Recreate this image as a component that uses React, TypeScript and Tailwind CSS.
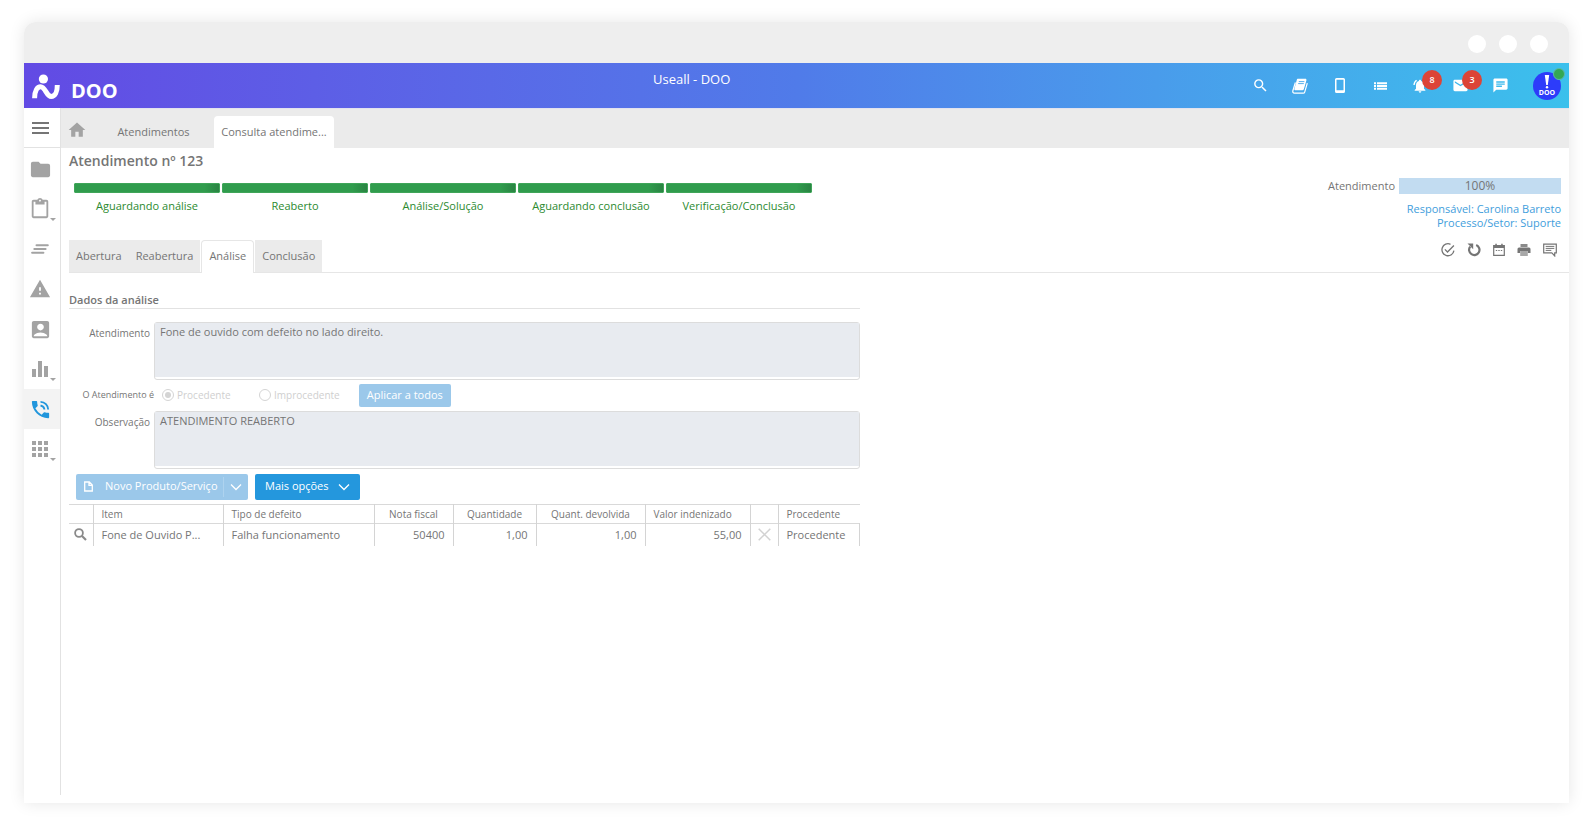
import type { ReactNode } from 'react';
import {
  MdAccountBox,
  MdApps,
  MdChat,
  MdContentPaste,
  MdEmail,
  MdEqualizer,
  MdFolder,
  MdHome,
  MdNotificationsActive,
  MdPhoneInTalk,
  MdSearch,
  MdWarning,
} from 'react-icons/md';

const STEPS = ['Aguardando análise', 'Reaberto', 'Análise/Solução', 'Aguardando conclusão', 'Verificação/Conclusão'];

const SECTION_TABS = ['Abertura', 'Reabertura', 'Análise', 'Conclusão'];

interface SidebarItem {
  label: string;
  icon: ReactNode;
  hasMenu?: boolean;
  active?: boolean;
}

const SIDEBAR_ITEMS: SidebarItem[] = [
  { label: 'Arquivos', icon: <MdFolder size={23} /> },
  { label: 'Tarefas', icon: <MdContentPaste size={22} />, hasMenu: true },
  { label: 'Listas', icon: <LinesIcon /> },
  { label: 'Alertas', icon: <MdWarning size={22} /> },
  { label: 'Contatos', icon: <MdAccountBox size={23} /> },
  { label: 'Indicadores', icon: <MdEqualizer size={24} />, hasMenu: true },
  { label: 'Atendimentos', icon: <MdPhoneInTalk size={23} />, active: true },
  { label: 'Aplicativos', icon: <MdApps size={24} />, hasMenu: true },
];

function Logo() {
  return (
    <svg width="30" height="27" viewBox="0 0 30 27" fill="none" aria-hidden="true">
      <circle cx="12.4" cy="6" r="4.6" fill="#fff" />
      <path
        d="M3.6 25.3C3.6 17.5 6.3 13.8 9.6 13.8C14.4 13.8 15.4 23.4 20.2 23.4C24 23.4 26.300 19 26.300 12"
        stroke="#fff"
        strokeWidth="5"
      />
    </svg>
  );
}

function LinesIcon() {
  return (
    <svg width="18" height="10" viewBox="0 0 18 10" fill="none" stroke="currentColor" strokeWidth="2" strokeLinecap="round" aria-hidden="true">
      <path d="M5.500 1.200H16.800M3.300 5H14.600M1.100 8.800H12.400" />
    </svg>
  );
}

function DetailsIcon() {
  return (
    <svg width="13" height="13" viewBox="0 0 13 13" fill="none" stroke="currentColor" aria-hidden="true">
      <circle cx="5" cy="5" r="3.900" strokeWidth="1.800" />
      <path d="M8 8 12 12" strokeWidth="2.200" />
    </svg>
  );
}

function BookIcon() {
  return (
    <svg width="16" height="16" viewBox="0 0 16 16" aria-hidden="true">
      <path
        d="M5.600.700h7.600c1 0 1.500.7 1.200 1.700l-2.600 8.800c-.2.700-.7 1.100-1.400 1.100H3.600c-1 0-1.500-.6-1.200-1.500L4.900 1.500c.1-.5.300-.8.700-.8z"
        fill="#fff"
      />
      <path
        d="M3.400 4.500 1 12.200c-.6 1.800.1 3 1.600 3h8.600c.8 0 1.300-.4 1.500-1.100l2.600-8.900"
        fill="none"
        stroke="#fff"
        strokeWidth="1.200"
      />
      <path d="M6.800 3.600h5.600M6.200 5.600h5.600" stroke="#44a6ea" strokeWidth="0.900" />
    </svg>
  );
}

function PhoneIcon() {
  return (
    <svg width="10" height="15" viewBox="0 0 10 15" aria-hidden="true">
      <path
        fillRule="evenodd"
        fill="#fff"
        d="M1.600 0h6.800A1.600 1.600 0 0 1 10 1.600v11.800A1.600 1.600 0 0 1 8.400 15H1.600A1.600 1.600 0 0 1 0 13.400V1.600A1.600 1.600 0 0 1 1.600 0zM1.500 1.700v10.600h7V1.700z"
      />
    </svg>
  );
}

function ListIcon() {
  return (
    <svg width="13" height="8" viewBox="0 0 13 8" fill="none" stroke="#fff" strokeWidth="1.900" aria-hidden="true">
      <path d="M0 1.300h2M0 4h2M0 6.700h2M3 1.300h10M3 4h10M3 6.700h10" />
    </svg>
  );
}

function CheckCircleIcon() {
  return (
    <svg width="14" height="14" viewBox="0 0 14 14" fill="none" stroke="#757575" strokeWidth="1.300" aria-hidden="true">
      <path d="M9.500 1.300A6 6 0 1 0 12.900 7.600" />
      <path d="M3.900 6.400 6.500 9 12.900 2.500" />
    </svg>
  );
}

function ReloadIcon() {
  return (
    <svg width="14" height="14" viewBox="0 0 14 14" fill="none" aria-hidden="true">
      <path d="M9.200 2A5.200 5.200 0 1 1 3.200 3.600" stroke="#757575" strokeWidth="2.200" />
      <path d="M.500.600h5.700v5.700z" fill="#757575" />
    </svg>
  );
}

function CalendarIcon() {
  return (
    <svg width="12" height="14" viewBox="0 0 12 14" fill="none" aria-hidden="true">
      <path d="M.7 2.700h10.600v9.600H.7z" stroke="#757575" strokeWidth="1.200" />
      <path d="M.7 2h10.600v3H.7zM2.300.700h1.500v2H2.300zM8.200.700h1.500v2H8.200z" fill="#757575" />
      <path d="M2.800 7.500h1.400M5.300 7.500h1.400M7.800 7.500h1.400" stroke="#757575" strokeWidth="1.200" />
    </svg>
  );
}

function PrinterIcon() {
  return (
    <svg width="14" height="14" viewBox="0 0 14 14" aria-hidden="true">
      <path d="M3.500 1h7v3h-7z" fill="#8a8a8a" />
      <path d="M2 4.500h10a1.500 1.500 0 0 1 1.500 1.500v4h-2.700V8H3.200v2H.5V6A1.500 1.500 0 0 1 2 4.500z" fill="#757575" />
      <path d="M3.200 8h7.600v5H3.200z" fill="#a8a8a8" />
    </svg>
  );
}

function CommentIcon() {
  return (
    <svg width="14" height="14" viewBox="0 0 14 14" fill="none" aria-hidden="true">
      <path d="M.7 1.200h12.600v8.700h-1.600v3L8.800 9.900H.7z" stroke="#757575" strokeWidth="1.200" />
      <path d="M2.700 3.400h8.600M2.700 5.400h8.600M2.700 7.400h5.600" stroke="#757575" strokeWidth="1" />
    </svg>
  );
}

function ChevronIcon() {
  return (
    <svg width="12" height="8" viewBox="0 0 12 8" fill="none" aria-hidden="true">
      <path d="M1 1.500 6 6.500 11 1.500" stroke="#fff" strokeWidth="1.300" />
    </svg>
  );
}

function Badge({ count }: { count: number }) {
  return (
    <span className="absolute -top-0.5 left-[22px] flex size-5 items-center justify-center rounded-full bg-[#dc4437] text-[9px] font-semibold text-white">
      {count}
    </span>
  );
}

function HeaderButton({ label, children }: { label: string; children: ReactNode }) {
  return (
    <button type="button" aria-label={label} className="relative flex h-7 w-10 items-center justify-center text-white">
      {children}
    </button>
  );
}

function Header() {
  return (
    <header className="grid h-[45px] grid-cols-[3fr_auto_4fr] bg-linear-to-r from-[#624ae4] via-[#507be9] to-[#3bc0ec]">
      <div className="flex items-end gap-2.5 pb-2 pl-[7px]">
        <Logo />
        <span className="text-xl leading-[18px] font-bold text-white">DOO</span>
      </div>
      <h1 className="pt-2 text-[13px] leading-4 text-white">Useall - DOO</h1>
      <div className="flex items-center justify-end pr-2">
        <HeaderButton label="Pesquisar">
          <MdSearch size={17} />
        </HeaderButton>
        <HeaderButton label="Manual">
          <BookIcon />
        </HeaderButton>
        <HeaderButton label="Celular">
          <PhoneIcon />
        </HeaderButton>
        <HeaderButton label="Lista">
          <ListIcon />
        </HeaderButton>
        <HeaderButton label="Notificações">
          <MdNotificationsActive size={16} />
          <Badge count={8} />
        </HeaderButton>
        <HeaderButton label="Mensagens">
          <MdEmail size={17} />
          <Badge count={3} />
        </HeaderButton>
        <HeaderButton label="Conversas">
          <MdChat size={17} />
        </HeaderButton>
        <button
          type="button"
          aria-label="Conta"
          className="relative ml-[13px] flex size-7 flex-col items-center justify-center rounded-full bg-[#2d3cfa] text-white"
        >
          <svg width="6" height="14" viewBox="0 0 6 14" fill="#fff" aria-hidden="true">
            <path d="M.8 0h4.400L3.800 10H2.200z" />
            <circle cx="3" cy="12.200" r="1.200" />
          </svg>
          <span className="text-[7px] leading-[7px] font-bold">DOO</span>
          <span className="absolute -top-1 -right-1 size-3 rounded-full border border-[#5cb8a8] bg-[#34a853]" />
        </button>
      </div>
    </header>
  );
}

function Sidebar() {
  return (
    <nav className="mb-2 w-[37px] shrink-0 border-r border-[#e2e2e2]">
      <button
        type="button"
        aria-label="Menu"
        className="flex h-10 w-full flex-col items-center justify-center gap-[3px] border-b border-[#e2e2e2] pr-1"
      >
        <span className="h-[2px] w-[17px] bg-[#757575]" />
        <span className="h-[2px] w-[17px] bg-[#757575]" />
        <span className="h-[2px] w-[17px] bg-[#757575]" />
      </button>
      <ul className="pt-px">
        {SIDEBAR_ITEMS.map((item) => (
          <li key={item.label}>
            <button
              type="button"
              aria-label={item.label}
              className={
                item.active
                  ? 'flex h-10 w-full items-center justify-center bg-[#f3f3f3] pr-1 text-[#2196dc]'
                  : 'relative flex h-10 w-full items-center justify-center pr-1 text-[#a3a3a3]'
              }
            >
              {item.icon}
              {item.hasMenu && (
                <span className="absolute right-1 bottom-2 border-x-3 border-t-3 border-x-transparent border-t-[#a3a3a3]" />
              )}
            </button>
          </li>
        ))}
      </ul>
    </nav>
  );
}

function PageTabs() {
  return (
    <div className="flex h-10 items-end border-t border-[#e2e2ee] bg-[#ebebeb]">
      <button type="button" aria-label="Início" className="flex h-8 w-8 justify-center pt-1 text-[#a3a3a3]">
        <MdHome size={20} />
      </button>
      <button type="button" className="h-8 w-[121px] text-[11px] text-[#757575]">
        Atendimentos
      </button>
      <button type="button" className="h-8 w-[120px] rounded-t-sm bg-white text-[11px] text-[#757575]">
        Consulta atendime...
      </button>
    </div>
  );
}

function StepBar() {
  return (
    <ol className="flex w-full max-w-[738px] gap-[2px]">
      {STEPS.map((step) => (
        <li key={step} className="flex-1 text-center text-[11px] leading-4 text-[#2b8a2f]">
          <div className="mb-[5px] h-[10px] rounded-[1px] border border-[#3fa559] bg-linear-to-r from-[#309c4d] from-90% to-[#2a8443]" />
          {step}
        </li>
      ))}
    </ol>
  );
}

function Summary() {
  return (
    <div className="flex flex-col items-end">
      <div className="flex items-center gap-1">
        <span className="text-[11px] text-[#757575]">Atendimento</span>
        <div className="flex h-4 w-[162px] items-center justify-center bg-[#c2dcf1] text-xs text-[#757575]">100%</div>
      </div>
      <a href="#responsavel" className="mt-[7px] text-[11px] leading-[14px] text-[#3f9edc]">
        Responsável: Carolina Barreto
      </a>
      <a href="#setor" className="text-[11px] leading-[14px] text-[#3f9edc]">
        Processo/Setor: Suporte
      </a>
      <div className="mt-[13px] mr-1 flex items-center gap-3">
        <button type="button" aria-label="Concluir">
          <CheckCircleIcon />
        </button>
        <button type="button" aria-label="Atualizar">
          <ReloadIcon />
        </button>
        <button type="button" aria-label="Agenda">
          <CalendarIcon />
        </button>
        <button type="button" aria-label="Imprimir">
          <PrinterIcon />
        </button>
        <button type="button" aria-label="Comentários">
          <CommentIcon />
        </button>
      </div>
    </div>
  );
}

function SectionTabs() {
  return (
    <div className="flex border-b border-[#e6e6e6]">
      {SECTION_TABS.map((tab) => (
        <button
          key={tab}
          type="button"
          className={
            tab === 'Análise'
              ? 'mx-px -mb-px h-[33px] rounded-t-sm border border-b-0 border-[#e6e6e6] bg-white px-[7px] text-[11px] text-[#757575]'
              : 'h-8 bg-[#ebebeb] px-[7px] pt-px text-[11px] text-[#757575]'
          }
        >
          {tab}
        </button>
      ))}
    </div>
  );
}

function TextField({ id, label, value }: { id: string; label: string; value: string }) {
  return (
    <div className="flex">
      <label htmlFor={id} className="w-[85px] shrink-0 pt-[3px] pr-1 text-right text-[10px] leading-4 text-[#757575]">
        {label}
      </label>
      <div className="h-[58px] flex-1 rounded-[3px] border border-[#dcdcdc] pb-[2px]">
        <textarea
          id={id}
          readOnly
          defaultValue={value}
          className="block h-full w-full resize-none bg-[#e8ebf0] px-[5px] py-px text-[11px] leading-4 text-[#757575] outline-none"
        />
      </div>
    </div>
  );
}

function ItemsTable() {
  const head = 'h-[19px] border-l border-[#d4d4d4] px-2 font-normal text-[10px] first:border-l-0';
  const cell = 'h-[23px] border-l border-[#d4d4d4] px-2 first:border-l-0';
  return (
    <table className="w-full table-fixed border-collapse text-[11px] leading-4 text-[#757575]">
      <colgroup>
        <col className="w-6" />
        <col className="w-[130px]" />
        <col className="w-[151px]" />
        <col className="w-[79px]" />
        <col className="w-[83px]" />
        <col className="w-[109px]" />
        <col className="w-[105px]" />
        <col className="w-7" />
        <col />
      </colgroup>
      <thead>
        <tr className="border-y border-[#d9d9d9]">
          <th className={head} />
          <th className={`${head} text-left`}>Item</th>
          <th className={`${head} text-left`}>Tipo de defeito</th>
          <th className={`${head} text-center`}>Nota fiscal</th>
          <th className={`${head} text-center`}>Quantidade</th>
          <th className={`${head} text-center`}>Quant. devolvida</th>
          <th className={`${head} text-left`}>Valor indenizado</th>
          <th className={head} />
          <th className={`${head} text-left`}>Procedente</th>
        </tr>
      </thead>
      <tbody>
        <tr>
          <td>
            <button type="button" aria-label="Detalhes" className="flex w-full justify-center text-[#8a8a8a]">
              <DetailsIcon />
            </button>
          </td>
          <td className={`${cell} truncate`}>Fone de Ouvido P...</td>
          <td className={cell}>Falha funcionamento</td>
          <td className={`${cell} text-right`}>50400</td>
          <td className={`${cell} text-right`}>1,00</td>
          <td className={`${cell} text-right`}>1,00</td>
          <td className={`${cell} text-right`}>55,00</td>
          <td className="border-l border-[#d4d4d4]">
            <button type="button" aria-label="Remover" className="flex w-full justify-center">
              <svg width="13" height="13" viewBox="0 0 13 13" stroke="#d2d2d2" strokeWidth="1.500" aria-hidden="true">
                <path d="M.7.700 12.300 12.300M12.300.700.700 12.300" />
              </svg>
            </button>
          </td>
          <td className={`${cell} border-r`}>Procedente</td>
        </tr>
      </tbody>
    </table>
  );
}

function AnalysisForm() {
  return (
    <form className="w-full max-w-[791px]">
      <h3 className="border-b border-[#e2e2e2] text-[11px] leading-4 font-semibold text-[#757575]">Dados da análise</h3>
      <div className="mt-[13px]">
        <TextField id="atendimento" label="Atendimento" value="Fone de ouvido com defeito no lado direito." />
        <fieldset className="my-1 flex h-[23px] items-center text-[10px]">
          <legend className="float-left w-[85px] text-right text-[9px] text-[#757575]">O Atendimento é</legend>
          <label className="ml-2 flex w-[97px] items-center gap-[3px] text-[#cfcfcf]">
            <input
              type="radio"
              name="parecer"
              defaultChecked
              className="size-3 appearance-none rounded-full border border-[#d4d4d4] bg-[#d4d4d4] bg-clip-content p-[2px]"
            />
            Procedente
          </label>
          <label className="flex items-center gap-[3px] text-[#cfcfcf]">
            <input type="radio" name="parecer" className="size-3 appearance-none rounded-full border border-[#d4d4d4]" />
            Improcedente
          </label>
          <button type="button" className="ml-[19px] h-[23px] rounded-xs bg-[#9bc8ea] px-2 text-[11px] text-white">
            Aplicar a todos
          </button>
        </fieldset>
        <TextField id="observacao" label="Observação" value="ATENDIMENTO REABERTO" />
      </div>
      <div className="mt-[5px] mb-1 ml-[7px] flex gap-[7px]">
        <div className="flex h-[26px] w-[172px] items-center rounded-xs bg-[#9bc8ea] text-[11px] text-white">
          <button type="button" className="flex h-full flex-1 items-center gap-3 pl-2">
            <svg width="9" height="11" viewBox="0 0 9 11" fill="none" stroke="#fff" strokeWidth="1.300" aria-hidden="true">
              <path d="M.7 1h4.600L8.300 4v6H.7zM5 1v3.300h3.300" />
            </svg>
            Novo Produto/Serviço
          </button>
          <button
            type="button"
            aria-label="Mais ações"
            className="flex h-5 w-[25px] items-center justify-center border-l border-[#aed3ef]"
          >
            <ChevronIcon />
          </button>
        </div>
        <button
          type="button"
          className="flex h-[26px] w-[105px] items-center justify-between rounded-xs bg-[#2497dd] px-[10px] text-[11px] text-white"
        >
          Mais opções
          <ChevronIcon />
        </button>
      </div>
      <ItemsTable />
    </form>
  );
}

export default function App() {
  return (
    <div className="flex min-h-screen bg-white px-6 pt-[22px] pb-6 font-['Open_Sans','Noto_Sans',sans-serif]">
      <div className="flex flex-1 flex-col rounded-t-xl bg-white shadow-[0_0_16px_rgba(0,0,0,0.1)]">
        {/* Window bar */}
        <div className="flex h-[41px] items-center justify-end gap-[13px] rounded-t-xl bg-[#eeeeee] pt-[3px] pr-[21px]">
          <span className="size-[18px] rounded-full bg-white" />
          <span className="size-[18px] rounded-full bg-white" />
          <span className="size-[18px] rounded-full bg-white" />
        </div>
        <Header />
        <div className="flex flex-1">
          <Sidebar />
          <main className="min-w-0 flex-1">
            <PageTabs />
            <div className="pl-2">
              <h2 className="pt-[3px] text-sm leading-5 font-semibold text-[#757575]">Atendimento nº 123</h2>
              <div className="flex justify-between pt-[7px] pr-2">
                <div className="mt-[5px] flex-1 pl-[5px]">
                  <StepBar />
                </div>
                <Summary />
              </div>
              <div className="-mt-[17px]">
                <SectionTabs />
              </div>
              <div className="mt-[19px]">
                <AnalysisForm />
              </div>
            </div>
          </main>
        </div>
      </div>
    </div>
  );
}
